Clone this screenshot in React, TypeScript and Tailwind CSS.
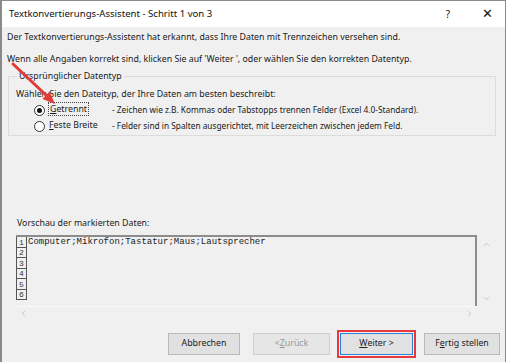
import { ChevronUp, ChevronDown, ChevronLeft, ChevronRight } from "lucide-react";

const ui = { fontFamily: '"Noto Sans", "Open Sans", sans-serif' };
const mono = { fontFamily: '"Liberation Mono", "DejaVu Sans Mono", monospace' };

const rows = ["Computer;Mikrofon;Tastatur;Maus;Lautsprecher", "", "", "", "", ""];

const Radio = ({ checked }: { checked?: boolean }) => (
  <span className="flex h-[11px] w-[11px] items-center justify-center rounded-full border border-[#333] bg-white">
    {checked && <span className="h-[5px] w-[5px] rounded-full bg-[#111]" />}
  </span>
);

const Btn = ({ children, w, disabled, primary }: { children: React.ReactNode; w: string; disabled?: boolean; primary?: boolean }) => (
  <div
    className={`flex h-[22px] items-center justify-center border text-[8.8px] ${w} ${
      disabled
        ? "border-[#cfcfcf] bg-[#e6e6e6] text-[#9a9a9a]"
        : primary
        ? "border-[#2a7fd4] bg-[#e1e1e1] text-[#222]"
        : "border-[#b9b9b9] bg-[#e1e1e1] text-[#222]"
    }`}
  >
    {children}
  </div>
);

export default function App() {
  return (
    <div className="relative h-[362px] w-[508px] overflow-hidden bg-white" style={ui}>
      <div className="flex h-full w-[506px] flex-col border-l-2 border-r border-t border-[#8a8a8a] bg-[#f0f0f0]">
        {/* title bar */}
        <div className="flex h-[26px] shrink-0 items-center bg-white pl-[7px] text-[9.6px] text-[#111]">
          <span>Textkonvertierungs-Assistent - Schritt 1 von 3</span>
          <span className="ml-auto mr-[32px] text-[10px]">?</span>
          <span className="mr-[12px] text-[13px] font-light">✕</span>
        </div>

        <div className="flex flex-1 flex-col px-[5px] text-[8.8px] text-[#1a1a1a]">
          <p className="mt-[3px] leading-[14px]">
            Der Textkonvertierungs-Assistent hat erkannt, dass Ihre Daten mit Trennzeichen versehen sind.
          </p>
          <p className="mt-[8px] leading-[14px]">
            Wenn alle Angaben korrekt sind, klicken Sie auf 'Weiter ', oder wählen Sie den korrekten Datentyp.
          </p>

          {/* group box */}
          <fieldset className="mt-[4px] ml-[1px] mr-[4px] h-[66px] border border-[#dcdcdc] px-[7px]">
            <legend className="ml-[1px] px-[2px] leading-[12px]">Ursprünglicher Datentyp</legend>
            <p className="mt-[5px] leading-[14px]">Wählen Sie den Dateityp, der Ihre Daten am besten beschreibt:</p>
            <div className="mt-[1px] flex h-[16px] items-center">
              <div className="ml-[18px]">
                <Radio checked />
              </div>
              <span className="ml-[3px] w-[64px]">
                <span className="border border-dotted border-[#444] px-[1px]">
                  <span className="underline">G</span>etrennt
                </span>
              </span>
              <span className="text-[8.3px]">- Zeichen wie z.B. Kommas oder Tabstopps trennen Felder (Excel 4.0-Standard).</span>
            </div>
            <div className="flex h-[16px] items-center">
              <div className="ml-[18px]">
                <Radio />
              </div>
              <span className="ml-[4px] w-[63px]">
                <span className="underline">F</span>este Breite
              </span>
              <span className="text-[8.3px]">- Felder sind in Spalten ausgerichtet, mit Leerzeichen zwischen jedem Feld.</span>
            </div>
          </fieldset>

          <div className="h-[80px]" />

          <p className="ml-[10px] leading-[14px]">Vorschau der markierten Daten:</p>

          {/* preview */}
          <div className="ml-[9px] mt-[5px] w-[480px]">
            <div className="flex">
              <div className="h-[71px] w-[461px] overflow-hidden border-r-2 border-t-2 border-[#8c8c8c]">
                {rows.map((r, i) => (
                  <div key={i} className="flex h-[10.5px] items-center">
                    <span
                      className="flex h-full w-[11px] items-end justify-center border-x border-b border-[#555] text-[8px] leading-[9px] text-[#333]"
                      style={mono}
                    >
                      {i + 1}
                    </span>
                    <span className="pl-[1px] text-[9px] leading-[10px] text-[#222]" style={mono}>
                      {r}
                    </span>
                  </div>
                ))}
              </div>
              <div className="flex w-[19px] flex-col items-center justify-between pb-[3px] pt-[5px] text-[#b5b5b5]">
                <ChevronUp size={9} />
                <ChevronDown size={9} />
              </div>
            </div>
            <div className="flex h-[14px] w-[461px] items-center justify-between border-t border-[#fafafa] px-[3px] text-[#b5b5b5]">
              <ChevronLeft size={9} />
              <ChevronRight size={9} />
            </div>
          </div>

          {/* buttons */}
          <div className="mt-auto mb-[4px] flex items-center pl-[161px]">
            <Btn w="w-[74px]">Abbrechen</Btn>
            <div className="ml-[13px]">
              <Btn w="w-[77px]" disabled>
                &lt;{" "}<span className="underline">Z</span>urück
              </Btn>
            </div>
            <div className="ml-[7px] border-2 border-[#e5393f] p-[1px]">
              <Btn w="w-[73px]" primary>
                <span className="underline">W</span>eiter &gt;
              </Btn>
            </div>
            <div className="ml-[8px]">
              <Btn w="w-[76px]">
                F<span className="underline">e</span>rtig stellen
              </Btn>
            </div>
          </div>
        </div>
      </div>

      {/* red annotation arrow */}
      <svg className="pointer-events-none absolute left-0 top-0" width="508" height="362">
        <line x1="13" y1="64" x2="47" y2="96" stroke="#e53935" strokeWidth="3" strokeLinecap="round" />
        <polygon points="55,104 42.5,99 49.5,91.5" fill="#e53935" />
      </svg>
    </div>
  );
}
